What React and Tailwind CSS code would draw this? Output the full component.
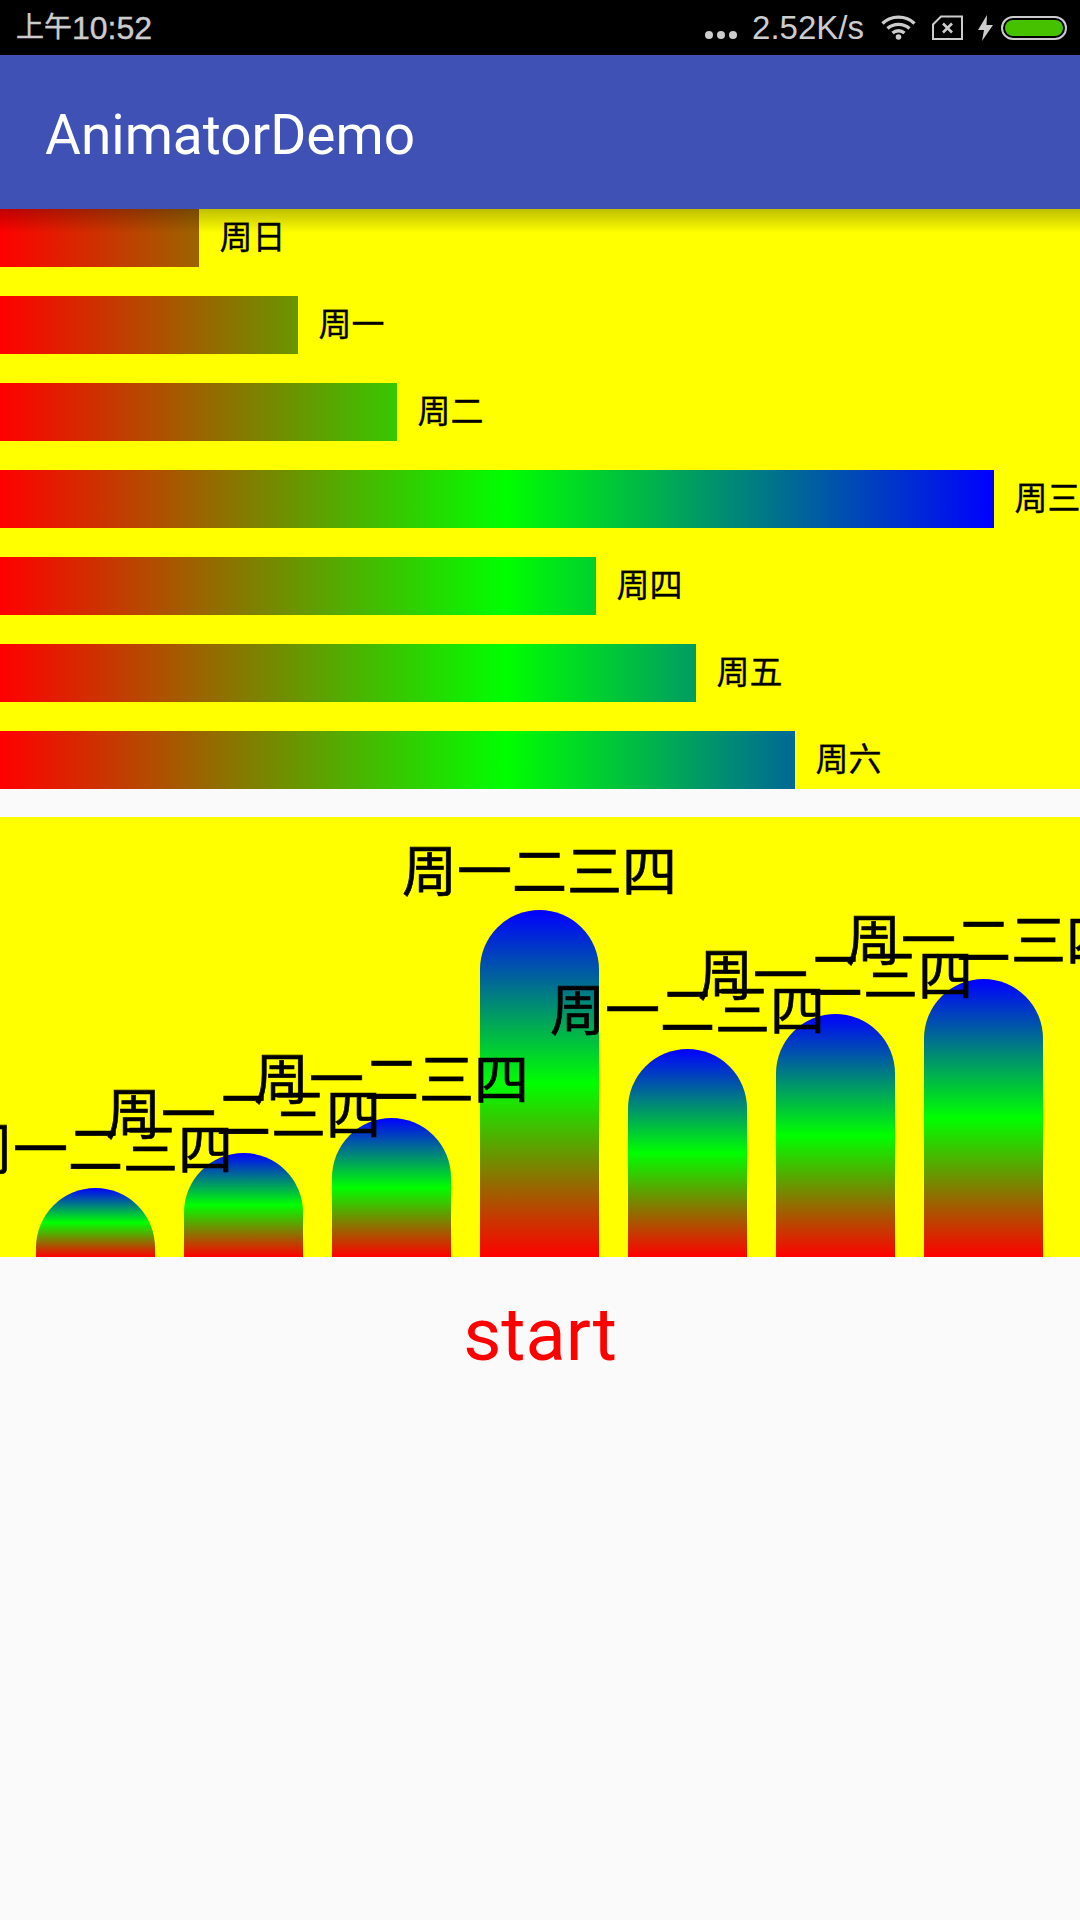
const days = [
  { n: "周日", w: 199 },
  { n: "周一", w: 298 },
  { n: "周二", w: 397 },
  { n: "周三", w: 994 },
  { n: "周四", w: 596 },
  { n: "周五", w: 696 },
  { n: "周六", w: 795 },
];
const heights = [69, 104, 139, 347, 208, 243, 278];
const cjk = { fontFamily: 'Roboto, "Noto Sans CJK SC", sans-serif' };
const sys = { fontFamily: '"Liberation Sans", "Noto Sans CJK SC", sans-serif' };

function StatusBar() {
  return (
    <div className="h-[55px] bg-black text-[#cccccc] flex items-center pl-[16px] pr-[13px] shrink-0" style={sys}>
      <span className="leading-none flex items-center [-webkit-text-stroke:0.4px_#cccccc]">
        <span className="text-[28px]">上午</span>
        <span className="text-[32px]">10:52</span>
      </span>
      <div className="ml-auto flex items-center">
        <div className="flex gap-[4px] mt-[14px] mr-[15px]">
          <i className="w-[8px] h-[8px] rounded-full bg-[#cccccc]" />
          <i className="w-[8px] h-[8px] rounded-full bg-[#cccccc]" />
          <i className="w-[8px] h-[8px] rounded-full bg-[#cccccc]" />
        </div>
        <span className="text-[33px] leading-none mr-[17px]">2.52K/s</span>
        <svg width="35" height="25" viewBox="0 0 35 25" fill="none" stroke="#cccccc" strokeWidth="3.4" className="mr-[16px]">
          <path d="M1.5 8.5C10 0 25 0 33.5 8.5" />
          <path d="M6.5 13.5C12.5 8 22.5 8 28.5 13.5" />
          <path d="M11.5 18C15 15 20 15 23.5 18" />
          <circle cx="17.5" cy="22" r="2.8" fill="#cccccc" stroke="none" />
        </svg>
        <svg width="31" height="25" viewBox="0 0 31 25" fill="none" stroke="#cccccc" strokeWidth="2" className="mr-[15px]">
          <path d="M9 1.5H30V24H1V9.5Z" />
          <path d="M11 8.5L20 17.5M20 8.5L11 17.5" strokeWidth="2.6" />
        </svg>
        <svg width="15" height="26" viewBox="0 0 15 26" fill="#cccccc" className="mr-[8px]">
          <path d="M9 0L0 15H6L4 26L15 10H8.5Z" />
        </svg>
        <div className="w-[66px] h-[24px] rounded-full border-2 border-[#cccccc] p-[2px]">
          <div className="h-full rounded-full bg-[#45c100]" />
        </div>
      </div>
    </div>
  );
}

export default function App() {
  return (
    <div className="w-[1080px] h-[1920px] bg-[#fafafa] overflow-hidden flex flex-col">
      <StatusBar />
      <header
        className="relative z-20 h-[154px] shrink-0 bg-[#3f51b5] flex items-center pl-[45px] pt-[6px] text-white text-[55px]"
        style={{ fontFamily: "Roboto, sans-serif" }}
      >
        AnimatorDemo
        <div className="absolute top-full inset-x-0 h-[24px] bg-gradient-to-b from-black/25 to-transparent" />
      </header>
      <div className="h-[580px] shrink-0 bg-[#ffff00] flex flex-col gap-[29px]" style={cjk}>
        {days.map((d) => (
          <div key={d.n} className="h-[58px] flex items-center shrink-0">
            <div
              className="h-full bg-[linear-gradient(90deg,#ff0000_0px,#00ff00_506px,#0000ff_994px)] shrink-0"
              style={{ width: d.w }}
            />
            <span className="ml-[20.5px] mb-[2px] text-[33px] leading-none text-black whitespace-nowrap [-webkit-text-stroke:0.3px_black]">{d.n}</span>
          </div>
        ))}
      </div>
      <div className="mt-[28px] h-[440px] shrink-0 bg-[#ffff00] flex items-end pl-[36px] gap-[29px]" style={cjk}>
        {heights.map((h, i) => (
          <div
            key={i}
            className="relative w-[119px] shrink-0 rounded-t-[60px] bg-[linear-gradient(to_top,#ff0000,#00ff00,#0000ff)]"
            style={{ height: h }}
          >
            <span className="absolute z-10 left-1/2 -translate-x-1/2 bottom-[100%] mb-[10px] text-[55px] leading-none text-black whitespace-nowrap [-webkit-text-stroke:0.7px_black]">
              周一二三四
            </span>
          </div>
        ))}
      </div>
      <button
        className="h-[156px] shrink-0 flex items-center justify-center text-[74px] text-[#ff0000] leading-none"
        style={{ fontFamily: "Roboto, sans-serif" }}
      >
        start
      </button>
    </div>
  );
}
